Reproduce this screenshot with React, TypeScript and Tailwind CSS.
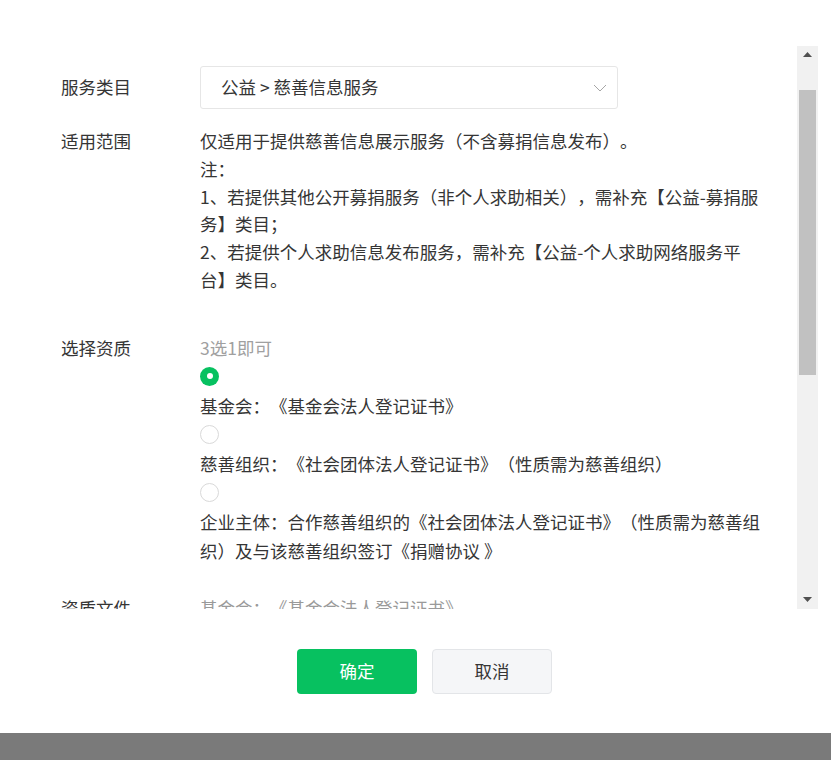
const font = { fontFamily: '"Noto Sans CJK SC", "Liberation Sans", sans-serif' };

function Radio({ checked }: { checked?: boolean }) {
  return (
    <div className="h-[29px] flex items-center">
      {checked ? (
        <span className="w-[19px] h-[19px] rounded-full bg-[#07c160] flex items-center justify-center">
          <span className="w-[6px] h-[6px] rounded-full bg-white" />
        </span>
      ) : (
        <span className="w-[19px] h-[19px] rounded-full border border-[#d9d9d9] bg-white" />
      )}
    </div>
  );
}

function Scrollbar() {
  return (
    <div className="w-[21px] h-full bg-[#f1f1f1] flex flex-col items-center">
      <div className="h-[17px] w-full flex items-center justify-center">
        <svg width="9" height="5" viewBox="0 0 9 5">
          <path d="M0 5 L4.5 0 L9 5 Z" fill="#505050" />
        </svg>
      </div>
      <div className="mt-[27px] w-[17px] h-[285px] bg-[#c1c1c1]" />
      <div className="flex-1" />
      <div className="h-[20px] w-full flex items-center justify-center">
        <svg width="9" height="5" viewBox="0 0 9 5">
          <path d="M0 0 L9 0 L4.5 5 Z" fill="#505050" />
        </svg>
      </div>
    </div>
  );
}

export default function App() {
  return (
    <div
      className="w-[831px] h-[760px] bg-[#7a7a7a] flex flex-col [text-spacing-trim:space-all]"
      style={font}
    >
      <div className="h-[733px] bg-white flex flex-col">
        <div className="mt-[46px] h-[563px] flex">
          <div className="flex-1 overflow-hidden pl-[61px] pr-[20px] pt-[20px] text-[17.5px] text-[#353535]">
            {/* 服务类目 */}
            <div className="flex items-center h-[43px]">
              <div className="w-[139px] shrink-0">服务类目</div>
              <div className="w-[418px] h-[43px] border border-[#e6e6e6] rounded-[3px] flex items-center justify-between pl-[20px] pr-[10px]">
                <span>公益 &gt; 慈善信息服务</span>
                <svg width="14" height="8" viewBox="0 0 14 8" fill="none">
                  <path d="M1 1 L7 7 L13 1" stroke="#a6a6a6" strokeWidth="1" />
                </svg>
              </div>
            </div>

            {/* 适用范围 */}
            <div className="flex mt-[18px] leading-[27.8px]">
              <div className="w-[139px] shrink-0">适用范围</div>
              <div className="flex-1 whitespace-nowrap">
                仅适用于提供慈善信息展示服务（不含募捐信息发布）。
                <br />
                注：
                <br />
                1、若提供其他公开募捐服务（非个人求助相关），需补充【公益-募捐服
                <br />
                务】类目；
                <br />
                2、若提供个人求助信息发布服务，需补充【公益-个人求助网络服务平
                <br />
                台】类目。
              </div>
            </div>

            {/* 选择资质 */}
            <div className="flex mt-[39px] leading-[29px]">
              <div className="w-[139px] shrink-0">选择资质</div>
              <div className="flex-1">
                <div className="text-[#a0a0a0]">3选1即可</div>
                <Radio checked />
                <div>基金会：《基金会法人登记证书》</div>
                <Radio />
                <div>慈善组织：《社会团体法人登记证书》（性质需为慈善组织）</div>
                <Radio />
                <div className="whitespace-nowrap">
                  企业主体：合作慈善组织的《社会团体法人登记证书》（性质需为慈善组
                  <br />
                  织）及与该慈善组织签订《捐赠协议 》
                </div>
              </div>
            </div>

            {/* 资质文件 */}
            <div className="flex mt-[28px] leading-[29px]">
              <div className="w-[139px] shrink-0">资质文件</div>
              <div className="flex-1 text-[#9a9a9a]">基金会：《基金会法人登记证书》</div>
            </div>
          </div>
          <Scrollbar />
          <div className="w-[13px]" />
        </div>

        <div className="mt-[40px] flex justify-center gap-[15px] pl-[18px]">
          <button className="w-[120px] h-[45px] rounded-[4px] bg-[#07c160] text-white text-[17.5px]">
            确定
          </button>
          <button className="w-[120px] h-[45px] rounded-[4px] bg-[#f5f6f8] border border-[#e3e5e8] text-[#353535] text-[17.5px]">
            取消
          </button>
        </div>
      </div>
    </div>
  );
}
